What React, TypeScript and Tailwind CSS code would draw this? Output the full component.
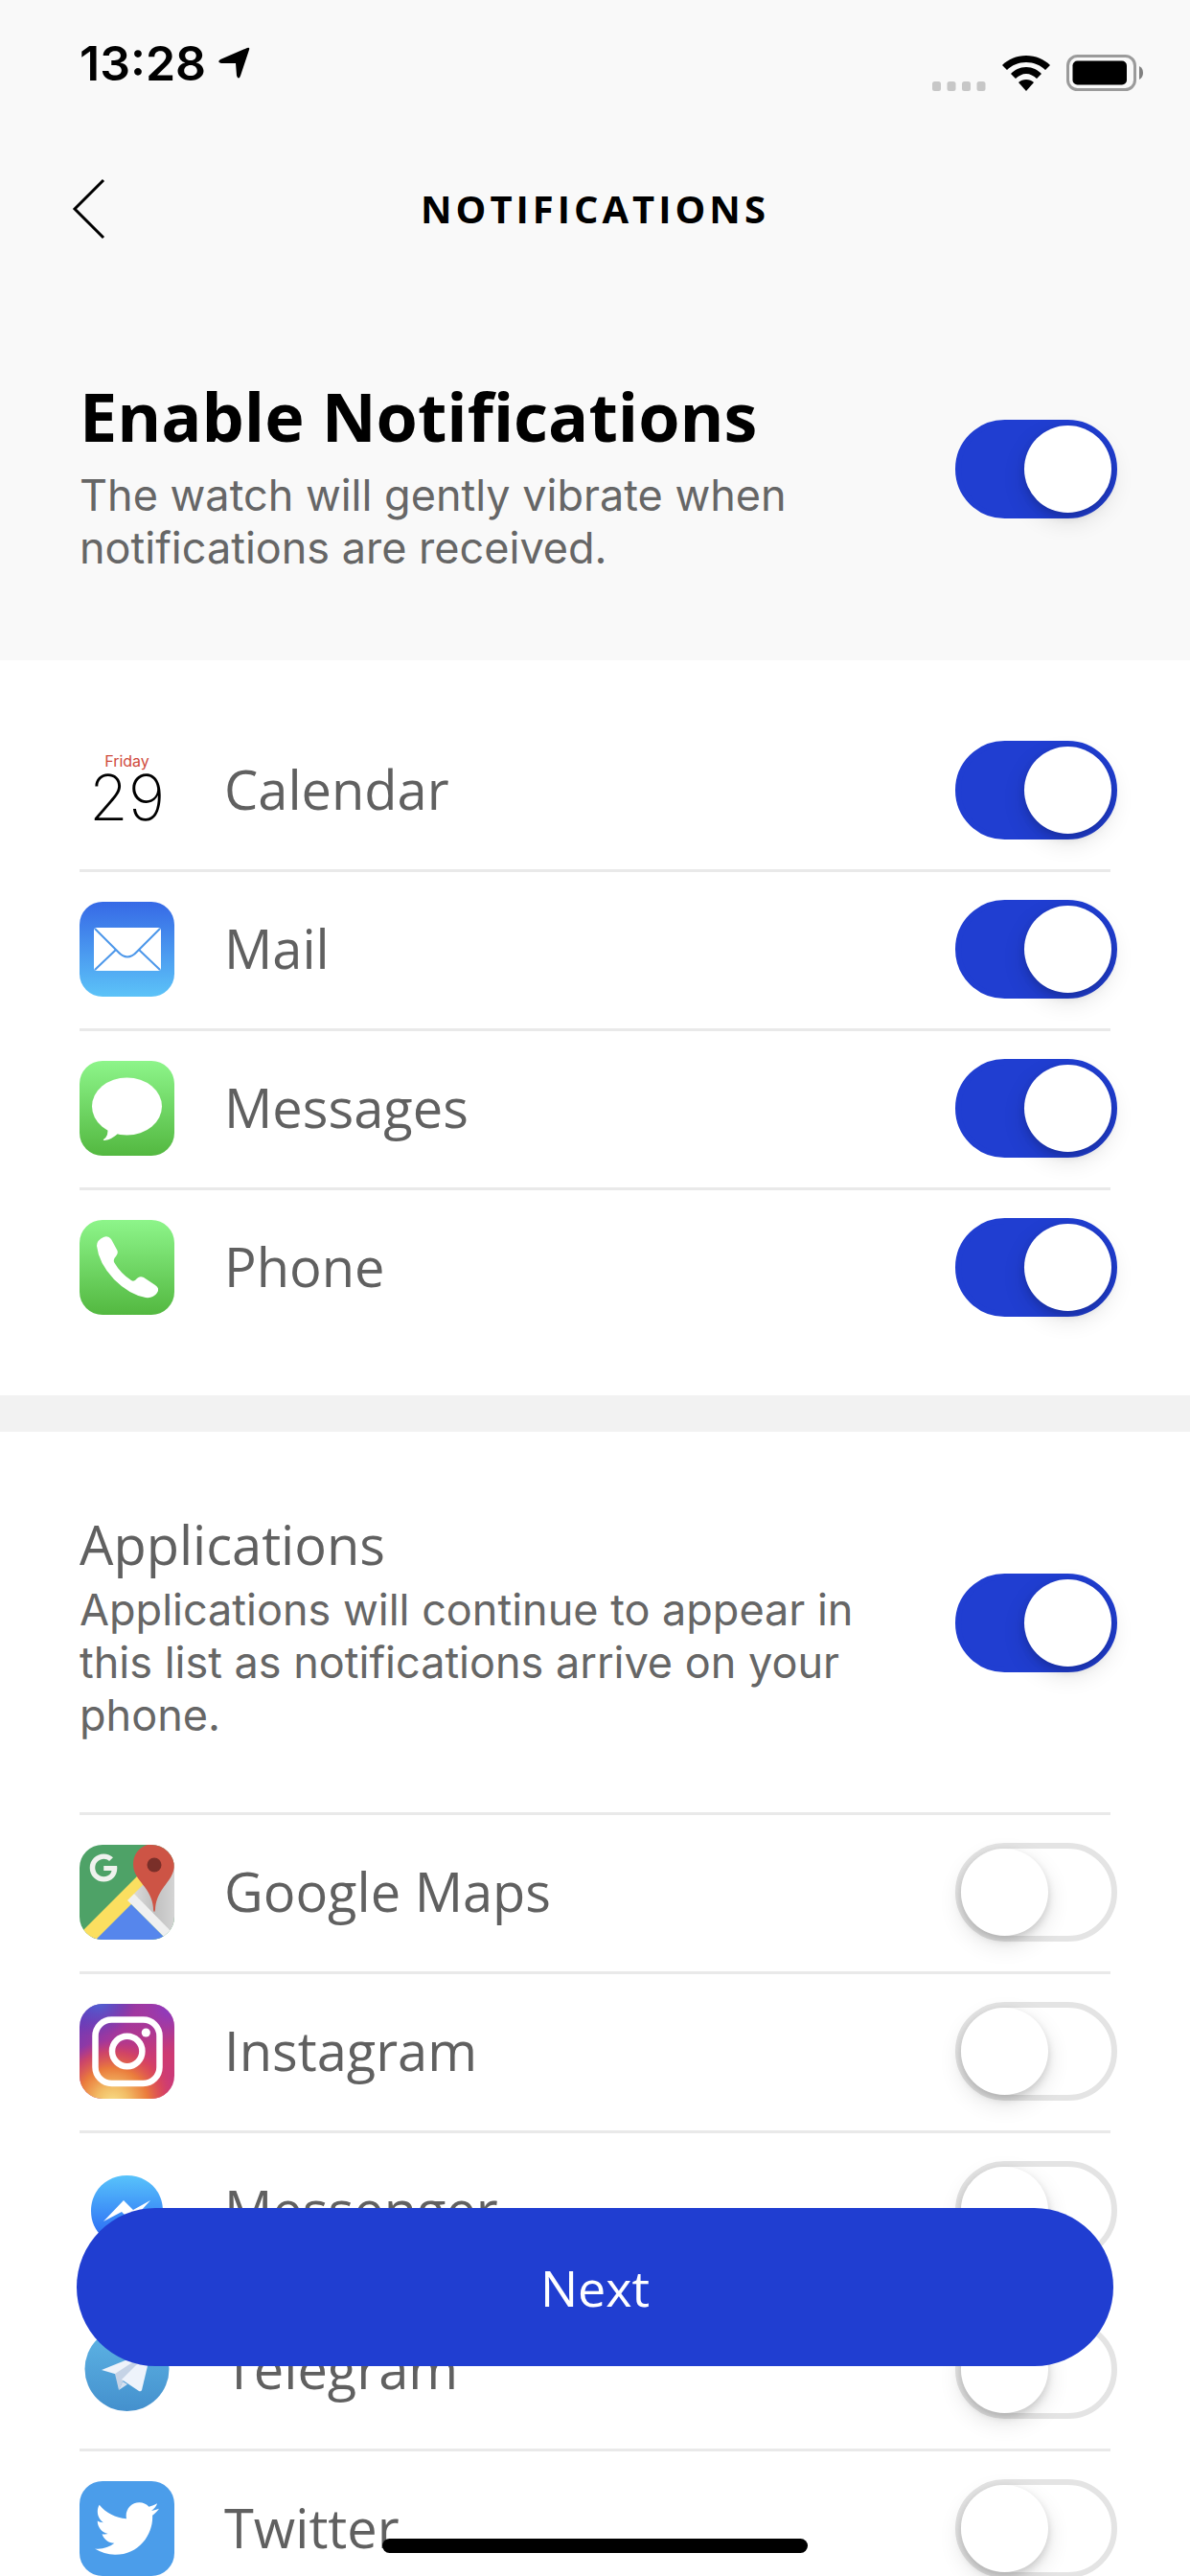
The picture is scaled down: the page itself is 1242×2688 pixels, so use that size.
import React, { useState } from 'react';
import { FaGoogle, FaTwitter } from 'react-icons/fa';

const SANS = "font-['Inter','Liberation_Sans',sans-serif]";
const BRAND = "font-['Open_Sans','Noto_Sans',sans-serif]";

type AppItem = {
  id: string;
  name: string;
  icon: React.ReactNode;
};

interface ToggleProps {
  id: string;
  checked: boolean;
  onChange: (checked: boolean) => void;
}

const Toggle: React.FC<ToggleProps> = ({ id, checked, onChange }) => (
  <input
    id={id}
    type="checkbox"
    role="switch"
    checked={checked}
    onChange={(e) => onChange(e.target.checked)}
    className="-mr-[7px] h-[103px] w-[169px] shrink-0 cursor-pointer appearance-none rounded-full border-[6px] border-[#e4e4e4] bg-white before:block before:size-[91px] before:rounded-full before:bg-white before:shadow-[0_9px_24px_rgba(0,0,0,0.12),0_4px_8px_rgba(0,0,0,0.15)] checked:border-[#203ed1] checked:bg-[#203ed1] checked:before:translate-x-[66px]"
  />
);

const CalendarIcon = () => (
  <div className={`${SANS} flex size-[99px] flex-col items-center pt-[10px]`}>
    <span className="text-[16px] leading-[18px] text-[#cf4a3c]">Friday</span>
    <span className="text-[66px] leading-[58px] font-extralight text-black">29</span>
  </div>
);

const MailIcon = () => (
  <svg viewBox="0 0 99 99" className="size-[99px]" aria-hidden="true">
    <defs>
      <linearGradient id="mail-bg" x1="0" y1="0" x2="0" y2="1">
        <stop offset="0" stopColor="#3669e6" />
        <stop offset="1" stopColor="#5cc3f8" />
      </linearGradient>
    </defs>
    <rect width="99" height="99" rx="24" fill="url(#mail-bg)" />
    <rect x="15" y="27" width="70" height="45" rx="3" fill="#fff" />
    <g fill="none" stroke="#4c97ea" strokeWidth="2">
      <path d="M16 28 L40 52 Q50 63 60 52 L84 28" />
      <path d="M16 71 L38 50 M84 71 L62 50" />
    </g>
  </svg>
);

const GreenTile: React.FC<{ id: string; children: React.ReactNode }> = ({ id, children }) => (
  <svg viewBox="0 0 99 99" className="size-[99px]" aria-hidden="true">
    <defs>
      <linearGradient id={id} x1="0" y1="0" x2="0" y2="1">
        <stop offset="0" stopColor="#8df58a" />
        <stop offset="1" stopColor="#53b840" />
      </linearGradient>
    </defs>
    <rect width="99" height="99" rx="24" fill={`url(#${id})`} />
    {children}
  </svg>
);

const MessagesIcon = () => (
  <GreenTile id="messages-bg">
    <ellipse cx="49.500" cy="47.500" rx="36.500" ry="30" fill="#fff" />
    <path d="M29 69 Q31 78 25 82 Q24 83 26 83 Q34 82 41 75 Z" fill="#fff" />
  </GreenTile>
);

const PhoneIcon = () => (
  <GreenTile id="phone-bg">
    <path
      d="M18 27 Q18 21 25 18 Q30 16 33 20 L39 31 Q41 34 38 38 Q35 41 36 44 Q43 56 54 63 Q57 65 60 61 Q63 58 67 60 L79 68 Q84 71 81 76 Q77 82 69 81 Q52 78 36 62 Q20 45 18 27 Z"
      fill="#fff"
    />
  </GreenTile>
);

const GoogleMapsIcon = () => (
  <svg viewBox="0 0 99 99" className="size-[99px]" aria-hidden="true">
    <defs>
      <clipPath id="maps-clip">
        <rect width="99" height="99" rx="24" />
      </clipPath>
      <linearGradient id="maps-shade" x1="0" y1="0" x2="1" y2="0">
        <stop offset="0" stopColor="#dadada" />
        <stop offset="0.5" stopColor="#c0c0c0" />
        <stop offset="1" stopColor="#d4d4d4" />
      </linearGradient>
    </defs>
    <g clipPath="url(#maps-clip)">
      <rect width="99" height="99" fill="#4ea267" />
      <path d="M50 58 L91 99 L9 99 Z" fill="#5686ec" />
      <path d="M-6 99 L70 23 L78 38 L9 107 Z" fill="#fbdf60" />
      <path d="M70 38 L99 20 L99 99 L57 51 Z" fill="url(#maps-shade)" />
      <path d="M57 51 L50 58 L93 101 L104 99 Z" fill="#f0f0f0" />
      <path
        d="M78 -1 C65 -1 56 8 56 20 C56 31 63 37 68 44 C74 52 77 60 77 68 Q78 72 79 68 C79 60 82 52 88 44 C93 37 99 31 99 20 C99 8 90 -1 78 -1 Z"
        fill="#cd5445"
      />
      <circle cx="78" cy="21" r="7.500" fill="#7a2f29" />
    </g>
    <FaGoogle x="10" y="9" size={30} color="#f0f2ee" />
  </svg>
);

const InstagramIcon = () => (
  <svg viewBox="0 0 99 99" className="size-[99px]" aria-hidden="true">
    <defs>
      <linearGradient id="ig-base" x1="0" y1="0" x2="1" y2="1">
        <stop offset="0" stopColor="#5a3cc0" />
        <stop offset="0.35" stopColor="#a3379c" />
        <stop offset="0.7" stopColor="#cf3a70" />
        <stop offset="1" stopColor="#c93a7d" />
      </linearGradient>
      <radialGradient id="ig-warm" cx="0.35" cy="1.05" r="0.68">
        <stop offset="0" stopColor="#f8e08a" />
        <stop offset="0.25" stopColor="#f2bd66" />
        <stop offset="0.55" stopColor="#ea7b3c" />
        <stop offset="0.8" stopColor="#dd4a54" stopOpacity="0.7" />
        <stop offset="1" stopColor="#cf3a70" stopOpacity="0" />
      </radialGradient>
      <radialGradient id="ig-cool" cx="0.2" cy="-0.05" r="0.4">
        <stop offset="0" stopColor="#4a6bd8" />
        <stop offset="1" stopColor="#5a3cc0" stopOpacity="0" />
      </radialGradient>
      <radialGradient id="ig-violet" cx="0.95" cy="0.05" r="0.5">
        <stop offset="0" stopColor="#8a3bc4" />
        <stop offset="1" stopColor="#a3379c" stopOpacity="0" />
      </radialGradient>
    </defs>
    <rect width="99" height="99" rx="24" fill="url(#ig-base)" />
    <rect width="99" height="99" rx="24" fill="url(#ig-violet)" />
    <rect width="99" height="99" rx="24" fill="url(#ig-cool)" />
    <rect width="99" height="99" rx="24" fill="url(#ig-warm)" />
    <g fill="none" stroke="#fff" strokeWidth="6.500">
      <rect x="16.500" y="16.500" width="67" height="66.500" rx="17" />
      <circle cx="49.700" cy="49.500" r="15.700" />
    </g>
    <circle cx="69.300" cy="30" r="4.600" fill="#fff" />
  </svg>
);

const MessengerIcon = () => (
  <svg viewBox="0 0 99 99" className="size-[99px]" aria-hidden="true">
    <defs>
      <linearGradient id="messenger-bg" x1="0" y1="0" x2="0" y2="1">
        <stop offset="0" stopColor="#58c3fb" />
        <stop offset="0.75" stopColor="#2f74f5" />
      </linearGradient>
    </defs>
    <path
      d="M49.500 13 C28 13 12 29 12 50 C12 61 16 70 24 77 L24 91 L37 84 C41 85 45 86 49.500 86 C71 86 87 70 87 50 C87 29 71 13 49.500 13 Z"
      fill="url(#messenger-bg)"
    />
    <path d="M25 61 L46 39 L56 49 L74 39 L54 61 L44 51 Z" fill="#fff" />
  </svg>
);

const TelegramIcon = () => (
  <svg viewBox="0 0 99 99" className="size-[99px]" aria-hidden="true">
    <defs>
      <linearGradient id="telegram-bg" x1="0" y1="0" x2="0" y2="1">
        <stop offset="0" stopColor="#5fb6e6" />
        <stop offset="1" stopColor="#4490cd" />
      </linearGradient>
    </defs>
    <circle cx="49.500" cy="49" r="44" fill="url(#telegram-bg)" />
    <path d="M23 50 L75 29 L40 55 Z" fill="#eef3fa" />
    <path d="M37 54 L75 29 L45 62 L41 71 Z" fill="#c5d3e6" />
    <path d="M44 60 L75 29 L65 71 Q64 73 62 72 Z" fill="#eef3fb" />
    <path d="M45 62 L50 65 L41 71 Z" fill="#d6e0ee" />
  </svg>
);

const TwitterIcon = () => (
  <div className="flex size-[99px] items-center justify-center rounded-3xl bg-[#4b9dea]">
    <FaTwitter className="size-[67px] text-white" aria-hidden="true" />
  </div>
);

const systemApps: AppItem[] = [
  { id: 'calendar', name: 'Calendar', icon: <CalendarIcon /> },
  { id: 'mail', name: 'Mail', icon: <MailIcon /> },
  { id: 'messages', name: 'Messages', icon: <MessagesIcon /> },
  { id: 'phone', name: 'Phone', icon: <PhoneIcon /> },
];

const otherApps: AppItem[] = [
  { id: 'google-maps', name: 'Google Maps', icon: <GoogleMapsIcon /> },
  { id: 'instagram', name: 'Instagram', icon: <InstagramIcon /> },
  { id: 'messenger', name: 'Messenger', icon: <MessengerIcon /> },
  { id: 'telegram', name: 'Telegram', icon: <TelegramIcon /> },
  { id: 'twitter', name: 'Twitter', icon: <TwitterIcon /> },
];

const StatusBar = () => (
  <div className={`${SANS} flex h-[132px] items-start justify-between pr-12 pl-[83px]`}>
    <div className="flex items-center gap-3 pt-9 text-[50px] leading-[60px] font-semibold text-black">
      13:28
      <svg viewBox="0 0 34 34" className="size-[34px]" aria-hidden="true">
        <path d="M31 1 Q34 0 33 3 L24 30 Q22 35 20 30 L19 17 L4 17 Q-1 16 3 13 Z" fill="#000" />
      </svg>
    </div>
    <div className="flex items-end pt-[57px]">
      <svg viewBox="0 0 56 10" className="h-[10px] w-[56px]" fill="#c7c7c7" aria-hidden="true">
        <rect x="0" width="9" height="10" rx="2.500" />
        <rect x="15.500" width="9" height="10" rx="2.500" />
        <rect x="31" width="9" height="10" rx="2.500" />
        <rect x="46.500" width="9" height="10" rx="2.500" />
      </svg>
      <svg viewBox="0 0 50 37" className="ml-[17px] h-[37px] w-[50px]" aria-hidden="true">
        <path d="M25 0 C15 0 6 4 0 10 L5 15 C10 10 17 7 25 7 C33 7 40 10 45 15 L50 10 C44 4 35 0 25 0 Z" />
        <path d="M25 12 C18 12 13 15 9 19 L14 24 C17 21 21 19 25 19 C29 19 33 21 36 24 L41 19 C37 15 32 12 25 12 Z" />
        <path d="M25 25 C22 25 19 26 17 28 L25 37 L33 28 C31 26 28 25 25 25 Z" />
      </svg>
      <svg viewBox="0 0 81 38" className="ml-[17px] h-[38px] w-[81px]" aria-hidden="true">
        <rect x="1.500" y="1.500" width="70" height="35" rx="10" fill="none" stroke="#9b9b9b" strokeWidth="3" />
        <rect x="6.500" y="6.500" width="56.500" height="25" rx="5" fill="#000" />
        <path d="M76 12 Q80 14 80 19 Q80 24 76 26 Z" fill="#808080" />
      </svg>
    </div>
  </div>
);

interface AppListProps {
  items: AppItem[];
  enabled: Record<string, boolean>;
  onToggle: (id: string, checked: boolean) => void;
}

const AppList: React.FC<AppListProps> = ({ items, enabled, onToggle }) => (
  <ul className="divide-y-[3px] divide-[#e9e9e9]">
    {items.map((item) => (
      <li key={item.id} className="flex items-center pt-[29px] pb-[31px]">
        {item.icon}
        <label
          htmlFor={item.id}
          className={`${BRAND} ml-[52px] flex-1 pb-1 text-[56px] leading-[80px] text-[#606060]`}
        >
          {item.name}
        </label>
        <Toggle
          id={item.id}
          checked={!!enabled[item.id]}
          onChange={(checked) => onToggle(item.id, checked)}
        />
      </li>
    ))}
  </ul>
);

const App = () => {
  const [enabled, setEnabled] = useState<Record<string, boolean>>({
    all: true,
    calendar: true,
    mail: true,
    messages: true,
    phone: true,
    applications: true,
  });

  const handleToggle = (id: string, checked: boolean) => {
    setEnabled({ ...enabled, [id]: checked });
  };

  return (
    <div className="relative h-screen overflow-hidden bg-white">
      <header className="bg-[#f9f9f9]">
        <StatusBar />
        <nav className="grid h-[172px] grid-cols-[1fr_auto_1fr] items-center px-[75px]">
          <button type="button" aria-label="Back" className="justify-self-start">
            <svg viewBox="0 0 36 64" className="h-16 w-9" aria-hidden="true">
              <path d="M33 2 L3 32 L33 62" fill="none" stroke="#000" strokeWidth="3" />
            </svg>
          </button>
          <h1 className={`${BRAND} text-[40px] leading-[54px] font-bold tracking-[4px] text-black`}>
            NOTIFICATIONS
          </h1>
        </nav>
        <div className="flex items-center justify-between px-[83px] pt-[76px] pb-[90px]">
          <div className="max-w-[840px]">
            <label
              htmlFor="all"
              className={`${BRAND} block text-[70px] leading-[109px] font-bold text-black`}
            >
              Enable Notifications
            </label>
            <p className={`${SANS} text-[45px] leading-[55px] text-[#666]`}>
              The watch will gently vibrate when notifications are received.
            </p>
          </div>
          <Toggle id="all" checked={enabled.all} onChange={(c) => handleToggle('all', c)} />
        </div>
      </header>

      <section className="px-[83px] pt-[55px] pb-[51px]">
        <AppList items={systemApps} enabled={enabled} onToggle={handleToggle} />
      </section>

      <section className="border-t-[38px] border-[#f2f2f2] px-[83px] pt-[76px]">
        <div className="flex items-center justify-between border-b-[3px] border-[#e9e9e9] pb-[74px]">
          <div className="max-w-[840px]">
            <label
              htmlFor="applications"
              className={`${BRAND} block text-[56px] leading-[82px] text-[#606060]`}
            >
              Applications
            </label>
            <p className={`${SANS} text-[45px] leading-[55px] text-[#666]`}>
              Applications will continue to appear in this list as notifications arrive on your phone.
            </p>
          </div>
          <Toggle
            id="applications"
            checked={enabled.applications}
            onChange={(c) => handleToggle('applications', c)}
          />
        </div>
        <AppList items={otherApps} enabled={enabled} onToggle={handleToggle} />
      </section>

      <div className="absolute inset-x-0 bottom-6 flex flex-col items-center gap-[180px] px-20">
        <button
          type="button"
          className={`${BRAND} h-[165px] w-full rounded-full bg-[#203ed1] text-[52px] leading-[74px] text-white`}
        >
          Next
        </button>
        <div className="h-[15px] w-[444px] rounded-full bg-black" />
      </div>
    </div>
  );
};

export default App;
